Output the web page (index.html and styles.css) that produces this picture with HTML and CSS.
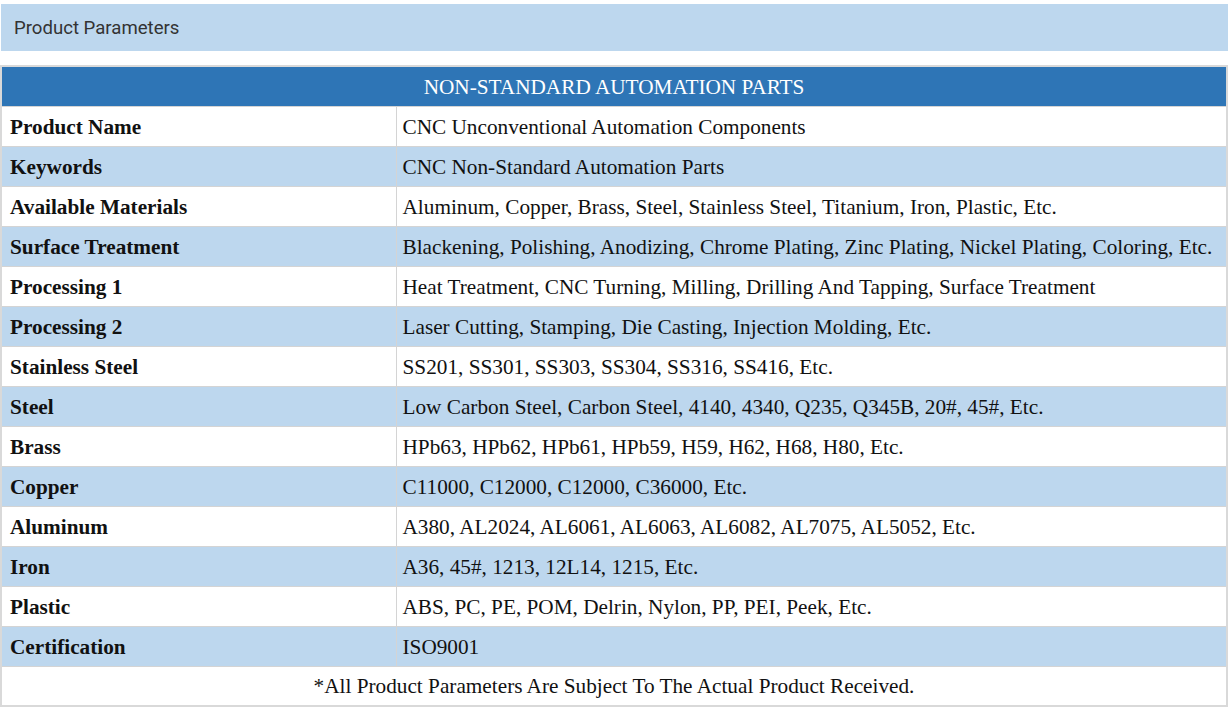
FILE: index.html
```html
<!DOCTYPE html>
<html>
<head>
<meta charset="utf-8">
<link rel="stylesheet" href="styles.css">
</head>
<body>
<div class="page">
  <div class="section-head">Product Parameters</div>
  <table class="params">
    <thead>
      <tr><th colspan="2" class="title">NON-STANDARD AUTOMATION PARTS</th></tr>
    </thead>
    <tbody>
      <tr><td class="label">Product Name</td><td>CNC Unconventional Automation Components</td></tr>
      <tr class="alt"><td class="label">Keywords</td><td>CNC Non-Standard Automation Parts</td></tr>
      <tr><td class="label">Available Materials</td><td>Aluminum, Copper, Brass, Steel, Stainless Steel, Titanium, Iron, Plastic, Etc.</td></tr>
      <tr class="alt"><td class="label">Surface Treatment</td><td>Blackening, Polishing, Anodizing, Chrome Plating, Zinc Plating, Nickel Plating, Coloring, Etc.</td></tr>
      <tr><td class="label">Processing 1</td><td>Heat Treatment, CNC Turning, Milling, Drilling And Tapping, Surface Treatment</td></tr>
      <tr class="alt"><td class="label">Processing 2</td><td>Laser Cutting, Stamping, Die Casting, Injection Molding, Etc.</td></tr>
      <tr><td class="label">Stainless Steel</td><td>SS201, SS301, SS303, SS304, SS316, SS416, Etc.</td></tr>
      <tr class="alt"><td class="label">Steel</td><td>Low Carbon Steel, Carbon Steel, 4140, 4340, Q235, Q345B, 20#, 45#, Etc.</td></tr>
      <tr><td class="label">Brass</td><td>HPb63, HPb62, HPb61, HPb59, H59, H62, H68, H80, Etc.</td></tr>
      <tr class="alt"><td class="label">Copper</td><td>C11000, C12000, C12000, C36000, Etc.</td></tr>
      <tr><td class="label">Aluminum</td><td>A380, AL2024, AL6061, AL6063, AL6082, AL7075, AL5052, Etc.</td></tr>
      <tr class="alt"><td class="label">Iron</td><td>A36, 45#, 1213, 12L14, 1215, Etc.</td></tr>
      <tr><td class="label">Plastic</td><td>ABS, PC, PE, POM, Delrin, Nylon, PP, PEI, Peek, Etc.</td></tr>
      <tr class="alt"><td class="label">Certification</td><td>ISO9001</td></tr>
      <tr><td colspan="2" class="note">*All Product Parameters Are Subject To The Actual Product Received.</td></tr>
    </tbody>
  </table>
</div>
</body>
</html>
```
FILE: styles.css
```css
html, body {
  margin: 0;
  padding: 0;
  background: #ffffff;
}
.page {
  width: 1228px;
  padding-top: 4px;
}
.section-head {
  height: 47px;
  box-sizing: border-box;
  background: #bdd7ee;
  padding-left: 13px;
  display: flex;
  align-items: center;
  font-family: Roboto, "Liberation Sans", sans-serif;
  font-size: 18.6px;
  color: #333333;
  margin-left: 1px;
}
.params {
  margin-top: 14px;
  width: 1228px;
  border-collapse: collapse;
  border: 2px solid #d9d9d9;
  font-family: "Liberation Serif", serif;
  font-size: 21.25px;
  color: #111111;
}
.params td, .params th {
  border: 1px solid #d4d4d4;
  height: 40px;
  box-sizing: border-box;
  padding: 2px 6px 0;
  text-align: left;
  font-weight: normal;
  white-space: nowrap;
}
.params th.title {
  background: #2e75b6;
  color: #ffffff;
  text-align: center;
  border: 1px solid #2e75b6;
  border-bottom: 1px solid #d4d4d4;
}
.params td.label {
  width: 395px;
  font-weight: bold;
  padding-left: 8px;
}
.params tr.alt td {
  background: #bdd7ee;
}
.params td.note {
  text-align: center;
}
```
